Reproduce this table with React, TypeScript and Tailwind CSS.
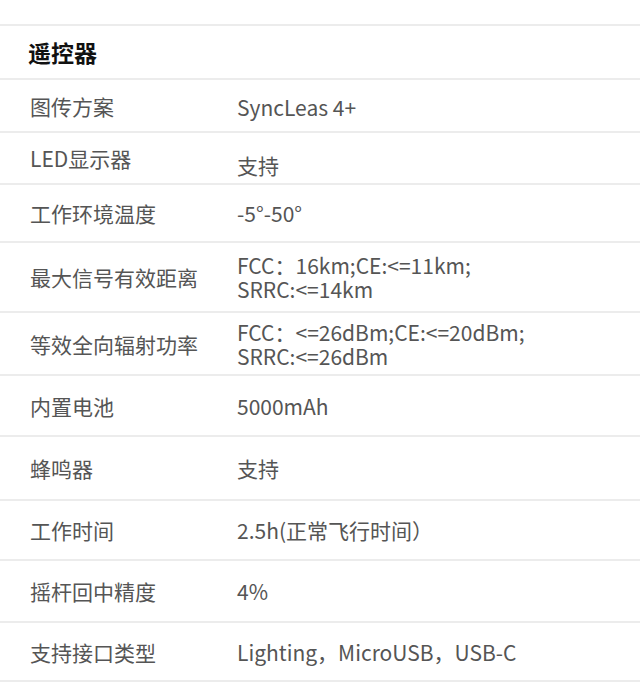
import React from "react";

type Row = { label: string; value: string[]; h: string; vcls?: string };

const rows: Row[] = [
  { label: "图传方案", value: ["SyncLeas 4+"], h: "h-[53px]", vcls: "pt-[3px]" },
  { label: "LED显示器", value: ["支持"], h: "h-[52px]", vcls: "pt-[14px]" },
  { label: "工作环境温度", value: ["-5°-50°"], h: "h-[58px]" },
  { label: "最大信号有效距离", value: ["FCC：16km;CE:<=11km;", "SRRC:<=14km"], h: "h-[70px]" },
  { label: "等效全向辐射功率", value: ["FCC：<=26dBm;CE:<=20dBm;", "SRRC:<=26dBm"], h: "h-[63px]" },
  { label: "内置电池", value: ["5000mAh"], h: "h-[61px]" },
  { label: "蜂鸣器", value: ["支持"], h: "h-[64px]" },
  { label: "工作时间", value: ["2.5h(正常飞行时间）"], h: "h-[60px]" },
  { label: "摇杆回中精度", value: ["4%"], h: "h-[62px]" },
  { label: "支持接口类型", value: ["Lighting，MicroUSB，USB-C"], h: "h-[59px]" },
];

export default function App() {
  return (
    <div
      className="w-[640px] h-[682px] bg-white overflow-hidden pt-[24px]"
      style={{ fontFamily: '"Noto Sans CJK SC", "Noto Sans", sans-serif' }}
    >
      <div className="border-t-2 border-[#ececec]">
        <div className="h-[54px] flex items-center pl-[28px] border-b-2 border-[#ececec] text-[23px] font-bold text-[#111]">
          遥控器
        </div>
        {rows.map((r) => (
          <div
            key={r.label}
            className={`${r.h} flex items-center border-b-2 border-[#ececec] text-[21px] text-[#555]`}
          >
            <div className="w-[237px] pl-[30px] shrink-0 leading-[28px]">{r.label}</div>
            <div className={`leading-[24px] ${r.vcls ?? ""}`}>
              {r.value.map((v) => (
                <div key={v}>{v}</div>
              ))}
            </div>
          </div>
        ))}
      </div>
    </div>
  );
}
